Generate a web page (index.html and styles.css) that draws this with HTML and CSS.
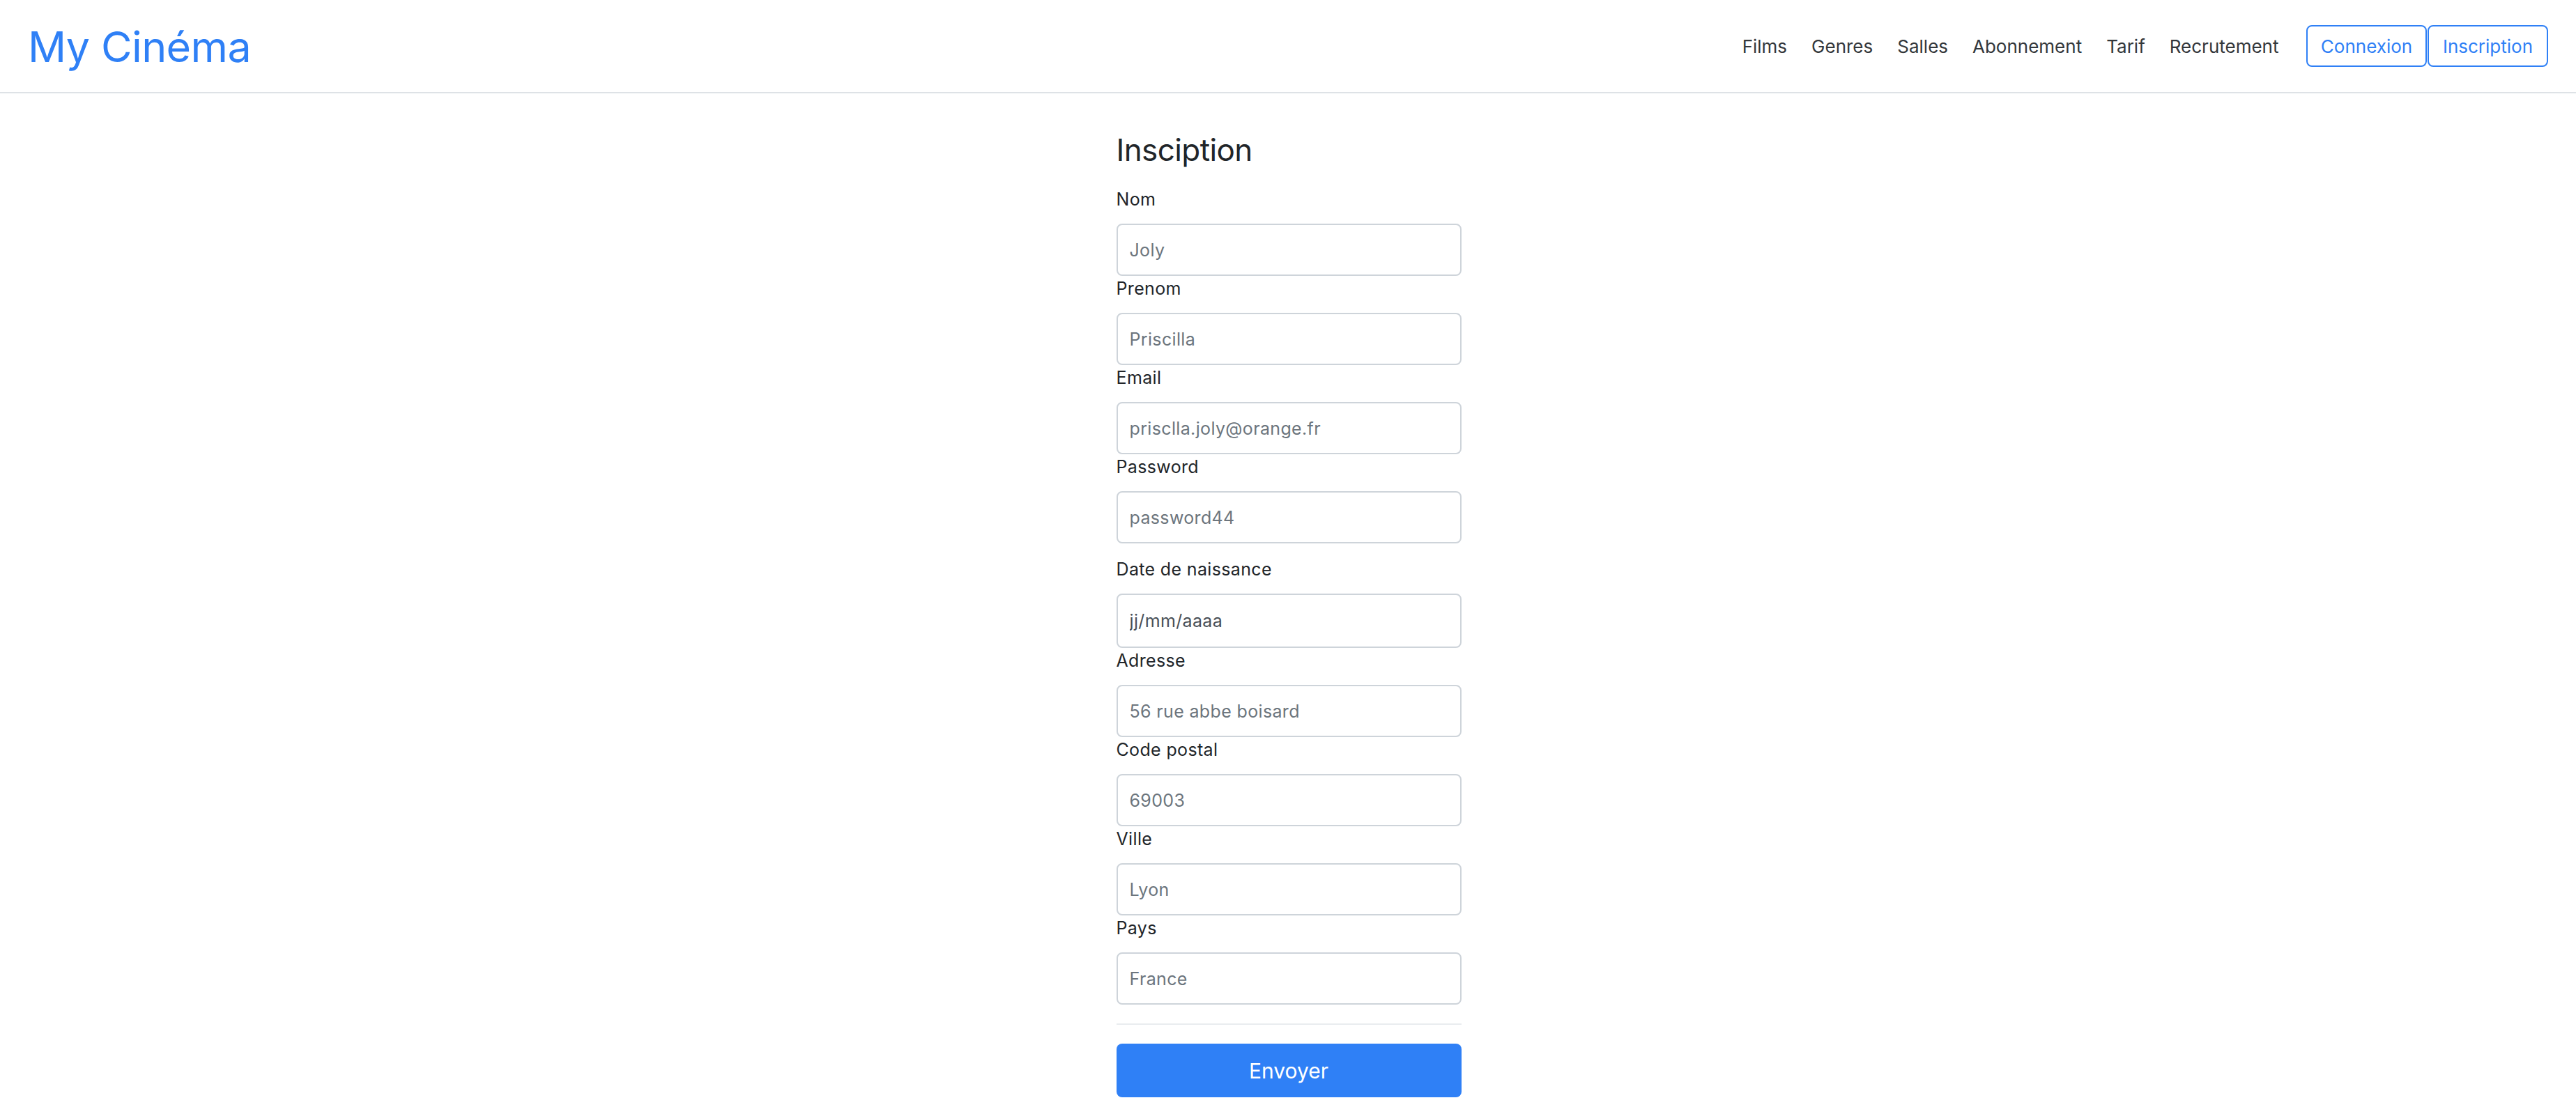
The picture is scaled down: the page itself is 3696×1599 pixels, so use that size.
FILE: index.html
```html
<!DOCTYPE html>
<html lang="fr">
<head>
<meta charset="utf-8">
<title>My Cinéma - Inscription</title>
<link rel="stylesheet" href="styles.css">
</head>
<body>
<header class="navbar">
  <a class="brand" href="#">My Cinéma</a>
  <nav class="nav">
    <a class="nav-link" href="#">Films</a>
    <a class="nav-link" href="#">Genres</a>
    <a class="nav-link" href="#">Salles</a>
    <a class="nav-link" href="#">Abonnement</a>
    <a class="nav-link" href="#">Tarif</a>
    <a class="nav-link" href="#">Recrutement</a>
  </nav>
  <div class="auth">
    <a class="btn-outline" href="#">Connexion</a>
    <a class="btn-outline" href="#">Inscription</a>
  </div>
</header>
<main class="main">
  <form class="form">
    <h1 class="title">Insciption</h1>
    <div class="group">
      <label class="label">Nom</label>
      <input class="input" type="text" placeholder="Joly">
    </div>
    <div class="group">
      <label class="label">Prenom</label>
      <input class="input" type="text" placeholder="Priscilla">
    </div>
    <div class="group">
      <label class="label">Email</label>
      <input class="input" type="text" placeholder="prisclla.joly@orange.fr">
    </div>
    <div class="group">
      <label class="label">Password</label>
      <input class="input" type="text" placeholder="password44">
    </div>
    <div class="group group-date">
      <label class="label">Date de naissance</label>
      <input class="input input-date" type="text" value="jj/mm/aaaa">
    </div>
    <div class="group">
      <label class="label">Adresse</label>
      <input class="input" type="text" placeholder="56 rue abbe boisard">
    </div>
    <div class="group">
      <label class="label">Code postal</label>
      <input class="input" type="text" placeholder="69003">
    </div>
    <div class="group">
      <label class="label">Ville</label>
      <input class="input" type="text" placeholder="Lyon">
    </div>
    <div class="group">
      <label class="label">Pays</label>
      <input class="input" type="text" placeholder="France">
    </div>
    <hr class="sep">
    <button class="btn-primary" type="button">Envoyer</button>
  </form>
</main>
</body>
</html>
```
FILE: styles.css
```css
* { box-sizing: border-box; }
html, body { margin: 0; padding: 0; }
body {
  font-family: Inter, "Noto Sans", "Liberation Sans", sans-serif;
  color: #212529;
  background: #fff;
}
a { text-decoration: none; }

.navbar {
  height: 134px;
  display: flex;
  align-items: center;
  padding: 0 40px 0 40px;
  border-bottom: 2px solid #dee2e6;
}
.brand {
  font-size: 61px;
  line-height: 1;
  color: #2f80f6;
  letter-spacing: -0.6px;
  margin-top: 2px;
}
.nav {
  margin-left: auto;
  display: flex;
  align-items: center;
}
.nav-link {
  font-size: 26px;
  line-height: 39px;
  color: #33373b;
  padding: 0 17.5px;
}
.auth {
  display: flex;
  margin-left: 22px;
  gap: 1px;
}
.btn-outline {
  display: flex;
  align-items: center;
  justify-content: center;
  width: 173px;
  height: 60px;
  border: 2px solid #2f80f6;
  border-radius: 8px;
  color: #2f80f6;
  font-size: 26px;
}

.main {
  display: flex;
  justify-content: center;
}
.form {
  width: 495px;
  margin-left: 2px;
  display: flex;
  flex-direction: column;
}
.title {
  font-size: 44px;
  line-height: 53px;
  font-weight: 400;
  margin: 55px 0 26px;
  letter-spacing: -0.6px;
}
.group {
  display: flex;
  flex-direction: column;
}
.group-date { margin-top: 19px; }
.label {
  font-size: 25px;
  line-height: 36px;
  letter-spacing: 0.35px;
  margin-bottom: 17px;
  color: #212529;
}
.input {
  height: 75px;
  width: 100%;
  border: 2px solid #ced4da;
  border-radius: 8px;
  padding: 0 17px;
  font-family: inherit;
  font-size: 25px;
  letter-spacing: 0.35px;
  color: #495057;
  background: #fff;
  outline: none;
}
.input::placeholder { color: #6c757d; opacity: 1; }
.input-date { height: 78px; color: #495057; }

.sep {
  border: 0;
  border-top: 2px solid #e9ecef;
  margin: 27px 0 27px;
  width: 100%;
}
.btn-primary {
  height: 77px;
  width: 100%;
  border: 0;
  border-radius: 8px;
  background: #2f80f6;
  color: #fff;
  font-family: inherit;
  font-size: 30px;
}
```
